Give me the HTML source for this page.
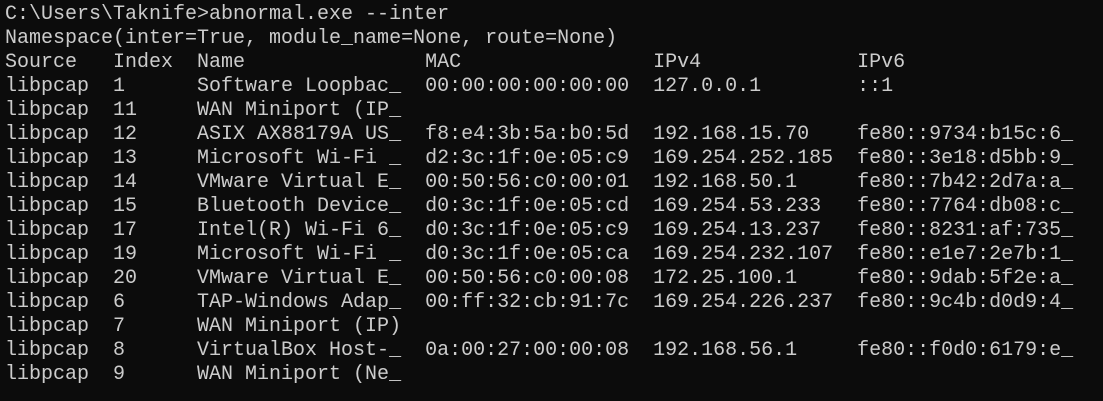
<!DOCTYPE html>
<html><head><meta charset="utf-8"><style>
html,body{margin:0;padding:0;background:#0c0c0c;width:1103px;height:401px;overflow:hidden}
pre{margin:0;padding:3px 0 0 5px;font-family:"Liberation Mono",monospace;font-size:20px;line-height:24px;color:#cccccc}
</style></head><body><pre>C:\Users\Taknife&gt;abnormal.exe --inter
Namespace(inter=True, module_name=None, route=None)
Source   Index  Name               MAC                IPv4             IPv6
libpcap  1      Software Loopbac_  00:00:00:00:00:00  127.0.0.1        ::1
libpcap  11     WAN Miniport (IP_
libpcap  12     ASIX AX88179A US_  f8:e4:3b:5a:b0:5d  192.168.15.70    fe80::9734:b15c:6_
libpcap  13     Microsoft Wi-Fi _  d2:3c:1f:0e:05:c9  169.254.252.185  fe80::3e18:d5bb:9_
libpcap  14     VMware Virtual E_  00:50:56:c0:00:01  192.168.50.1     fe80::7b42:2d7a:a_
libpcap  15     Bluetooth Device_  d0:3c:1f:0e:05:cd  169.254.53.233   fe80::7764:db08:c_
libpcap  17     Intel(R) Wi-Fi 6_  d0:3c:1f:0e:05:c9  169.254.13.237   fe80::8231:af:735_
libpcap  19     Microsoft Wi-Fi _  d0:3c:1f:0e:05:ca  169.254.232.107  fe80::e1e7:2e7b:1_
libpcap  20     VMware Virtual E_  00:50:56:c0:00:08  172.25.100.1     fe80::9dab:5f2e:a_
libpcap  6      TAP-Windows Adap_  00:ff:32:cb:91:7c  169.254.226.237  fe80::9c4b:d0d9:4_
libpcap  7      WAN Miniport (IP)
libpcap  8      VirtualBox Host-_  0a:00:27:00:00:08  192.168.56.1     fe80::f0d0:6179:e_
libpcap  9      WAN Miniport (Ne_
</pre></body></html>
